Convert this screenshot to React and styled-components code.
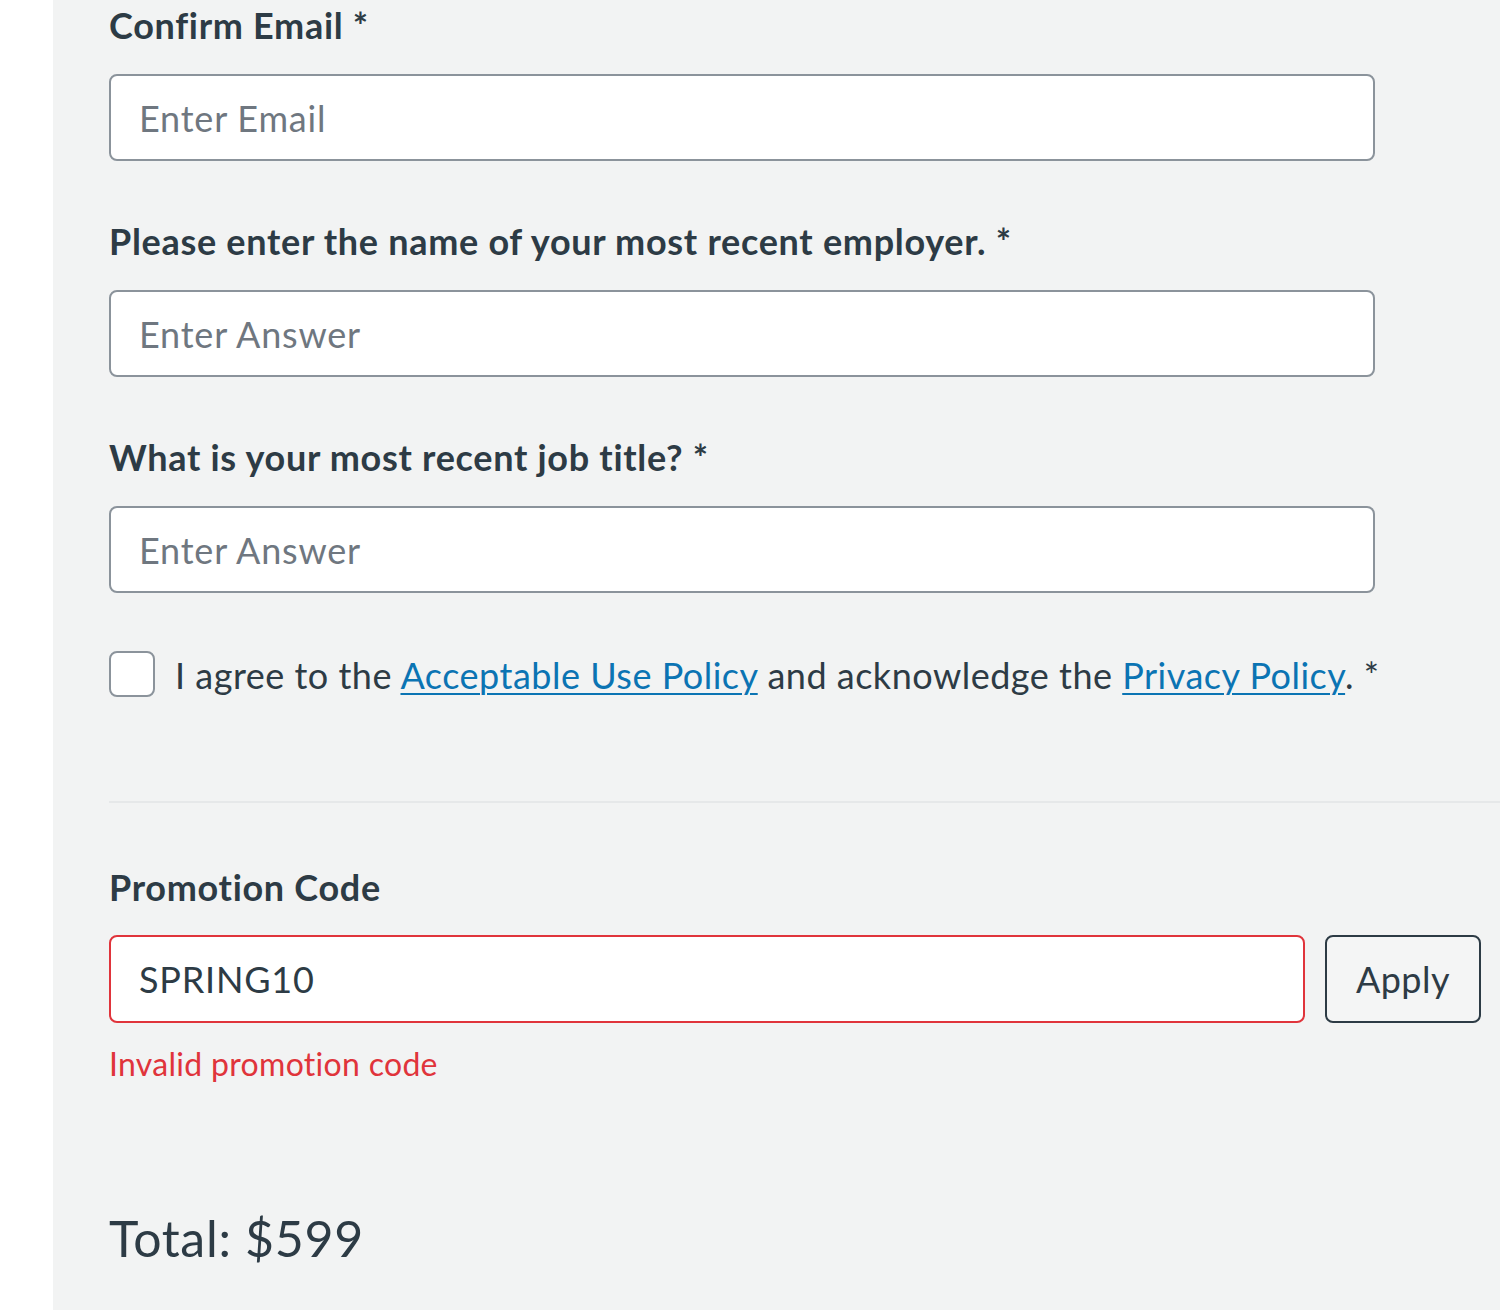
import styled, { createGlobalStyle } from 'styled-components';

const GlobalStyles = createGlobalStyle`
  html, body {
    margin: 0;
    padding: 0;
    background: #fff;
    overflow: hidden;
  }
  body {
    font-family: Lato, "Noto Sans", sans-serif;
    color: #2d3b45;
  }
`;

const fields = [
  { label: 'Confirm Email', placeholder: 'Enter Email' },
  { label: 'Please enter the name of your most recent employer.', placeholder: 'Enter Answer' },
  { label: 'What is your most recent job title?', placeholder: 'Enter Answer' },
];

function App() {
  return (
    <Page>
      <GlobalStyles />
      <Gutter />
      <Panel>
        {fields.map((f, i) => (
          <Field key={i} $first={i === 0}>
            <Label>{f.label} *</Label>
            <Input type="text" placeholder={f.placeholder} />
          </Field>
        ))}
        <AgreeRow>
          <Checkbox type="checkbox" />
          <AgreeText>
            I agree to the <Link href="#">Acceptable Use Policy</Link> and acknowledge the{' '}
            <Link href="#">Privacy Policy</Link>. *
          </AgreeText>
        </AgreeRow>
        <Divider />
        <PromoLabel>Promotion Code</PromoLabel>
        <PromoRow>
          <PromoInput type="text" defaultValue="SPRING10" $error />
          <ApplyButton>Apply</ApplyButton>
        </PromoRow>
        <ErrorText>Invalid promotion code</ErrorText>
        <Total>Total: $599</Total>
      </Panel>
    </Page>
  );
}

const Page = styled.div`
  display: flex;
  min-height: 1310px;
`;

const Gutter = styled.div`
  width: 53px;
  flex-shrink: 0;
  background: #fff;
`;

const Panel = styled.div`
  flex: 1;
  background: #f2f3f3;
  padding: 3px 0 0 56px;
  overflow: hidden;
`;

const Field = styled.div`
  display: flex;
  flex-direction: column;
  width: 1266px;
  margin-top: ${p => (p.$first ? '0' : '58px')};
`;

const Label = styled.label`
  font-size: 36px;
  line-height: 44px;
  font-weight: 700;
  letter-spacing: 0.7px;
  color: #2d3b45;
  margin-bottom: 27px;
`;

const Input = styled.input`
  box-sizing: border-box;
  height: 87px;
  width: 100%;
  padding: 0 28px;
  border: 2px solid ${p => (p.$error ? '#e0343b' : '#8b939b')};
  border-radius: 8px;
  background: #fff;
  font-family: Lato, "Noto Sans", sans-serif;
  font-size: 36px;
  letter-spacing: 0.8px;
  color: #2d3b45;
  outline: none;
  &::placeholder {
    color: #6f7780;
  }
`;

const PromoInput = styled(Input)`
  flex: 1;
  width: auto;
  min-width: 0;
  height: 88px;
`;

const AgreeRow = styled.div`
  display: flex;
  align-items: center;
  gap: 20px;
  margin-top: 58px;
  height: 46px;
`;

const Checkbox = styled.input`
  appearance: none;
  margin: 0;
  width: 46px;
  height: 46px;
  flex-shrink: 0;
  box-sizing: border-box;
  border: 2px solid #8b939b;
  border-radius: 8px;
  background: #fff;
`;

const AgreeText = styled.span`
  font-size: 36px;
  line-height: 46px;
  letter-spacing: 0.5px;
  white-space: nowrap;
  color: #2d3b45;
  padding-top: 2px;
`;

const Link = styled.a`
  color: #0b74b3;
  text-decoration: underline;
  text-underline-offset: 4px;
  text-decoration-thickness: 2px;
`;

const Divider = styled.hr`
  margin: 104px 0 0;
  border: none;
  border-top: 2px solid #e6e8e9;
  width: 1500px;
`;

const PromoLabel = styled(Label)`
  display: block;
  margin-top: 62px;
  margin-bottom: 26px;
`;

const PromoRow = styled.div`
  display: flex;
  gap: 20px;
  width: 1372px;
`;

const ApplyButton = styled.button`
  box-sizing: border-box;
  width: 156px;
  height: 88px;
  flex-shrink: 0;
  border: 2px solid #2d3b45;
  border-radius: 8px;
  background: #f4f5f5;
  font-family: Lato, "Noto Sans", sans-serif;
  font-size: 36px;
  letter-spacing: 0.5px;
  color: #2d3b45;
`;

const ErrorText = styled.div`
  margin-top: 22px;
  font-size: 32px;
  line-height: 38px;
  letter-spacing: 0.3px;
  color: #e0343b;
`;

const Total = styled.div`
  margin-top: 125px;
  font-size: 50px;
  line-height: 60px;
  letter-spacing: 0.7px;
  color: #2d3b45;
`;

export default App;
